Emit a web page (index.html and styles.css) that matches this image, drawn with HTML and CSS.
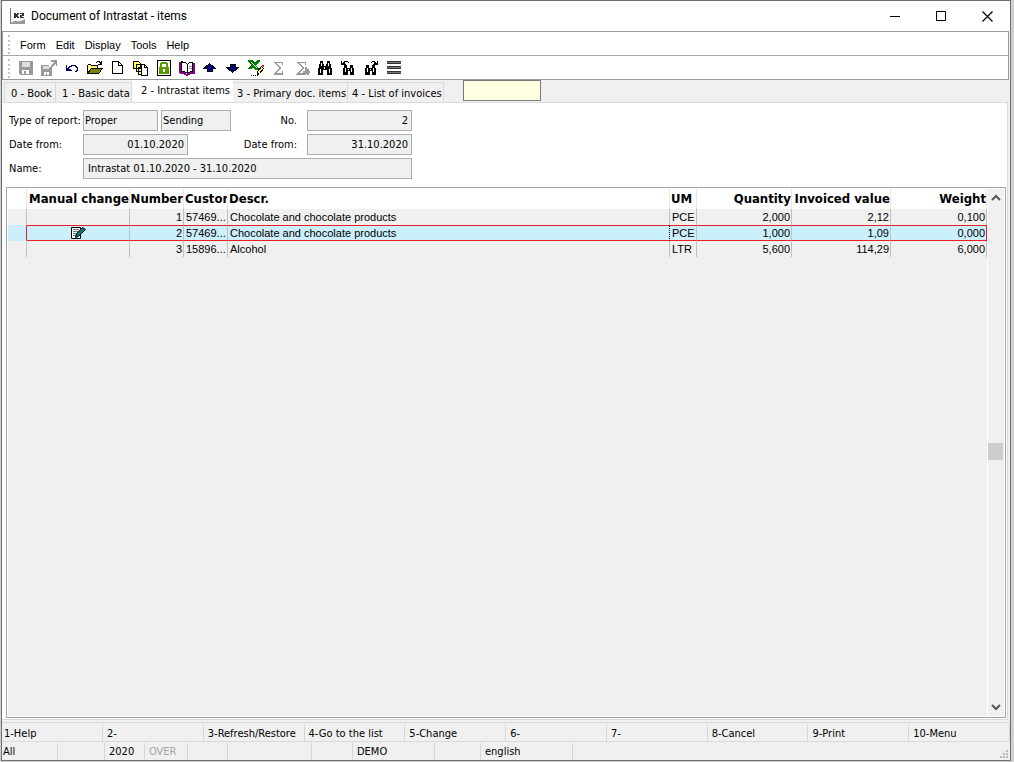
FILE: index.html
```html
<!DOCTYPE html>
<html lang="en">
<head>
<meta charset="utf-8">
<title>Document of Intrastat - items</title>
<link rel="stylesheet" href="styles.css">
</head>
<body>
<div class="window">
  <header class="titlebar">
    <svg class="app-icon" width="16" height="16" viewBox="0 0 16 16"><path d="M0 0h1v16H0z" fill="#777"/><path d="M1 15q3-3 6-2t8-2v5H1z" fill="#999"/><path d="M4 5h2v1h1V5h2v1L7.500 7.500 9 9v1H7V9H6v1H4zM10 5h4v3h-2v1h2v1h-4V7h2V6h-2z" fill="#333"/></svg>
    <h1 class="title">Document of Intrastat - items</h1>
    <div class="caption-buttons">
      <button class="caption" aria-label="Minimize"><svg width="11" height="11" viewBox="0 0 11 11"><path d="M0 5h10v1H0z"/></svg></button>
      <button class="caption" aria-label="Maximize"><svg width="11" height="11" viewBox="0 0 11 11"><path d="M.5.5h9v9h-9z" fill="none" stroke="#000"/></svg></button>
      <button class="caption" aria-label="Close"><svg width="11" height="11" viewBox="0 0 11 11"><path d="M.5.5l10 10M10.500.5l-10 10" fill="none" stroke="#000" stroke-width="1.200"/></svg></button>
    </div>
  </header>

  <div class="bars">
    <nav class="menu">
      <button>Form</button><button>Edit</button><button>Display</button><button>Tools</button><button>Help</button>
    </nav>
    <div class="toolbar">
      <button aria-label="Save"><svg viewBox="0 0 16 16"><path fill="#999" d="M1 1h14v14H2l-1-1z"/><path fill="#ddd" d="M4 2h8v5H4z"/><path fill="#fff" d="M4 10h7v4H8v-3H6v3H4z"/></svg></button>
      <button aria-label="Save and close"><svg viewBox="0 0 16 16"><path fill="#999" d="M0 5h8v2h3v9H0zM10 0h6v6h-1V4h-1v1h-1v1h-1v1h-2V5h1V4h1V3h1V2h-3z"/><path fill="#ddd" d="M2 6h6v3H2z"/><path fill="#fff" d="M3 12h5v3H6v-2H5v2H3z"/></svg></button>
      <button aria-label="Undo"><svg viewBox="0 0 16 16"><path fill="#00007c" d="M2 5h1v3h1V7h1V6h2V5h5v1h1v1h1v4h-1v1h-2v-1h1v-1h1V8h-1V7h-1V6H8v1H6v1H5v1h2v1h1v1H2z"/></svg></button>
      <button aria-label="Open"><svg viewBox="0 0 16 16"><path d="M0 5h1V4h3v1h7v3h5v1h-1v1h-1v2h-1v1h-1v1H0z"/><path fill="#ff7" d="M1 5h3v1h6v2H4v1H3v1H2v1H1z"/><path fill="#808000" d="M4 9h10v1h-1v2h-1v1H2v-1h1v-2h1z"/><path d="M9 2h1V1h3v1h1V1h1v4h-4V4h2V3h-1V2h-2v1H9z"/></svg></button>
      <button aria-label="New"><svg viewBox="0 0 16 16"><path fill="#fff" stroke="#000" d="M2.500 1.500h6l4 4v8h-10zM8.500 1.500v4h4"/></svg></button>
      <button aria-label="Copy"><svg viewBox="0 0 16 16"><path fill="#ff5" stroke="#000" d="M.5 1.500h5l2 2v5h-7zM3.500 4.500h5v7h-5zM5.500 7.500h4v7h-4z"/><path fill="#fff" stroke="#000" d="M8.500 4.500h3l3 3v8h-6zM11.500 4.500v3h3"/></svg></button>
      <button aria-label="Lock"><svg viewBox="0 0 16 16"><path fill="#fff" stroke="#000" d="M1.500.5h13v15h-13z"/><path fill="none" stroke="#5b9a00" stroke-width="2" d="M5 7V4l1-1h4l1 1v3"/><path fill="#5b9a00" d="M3 7h10v7H3z"/><path fill="#fff" d="M7 9h2v3H7z"/></svg></button>
      <button aria-label="Book"><svg viewBox="0 0 16 16"><path fill="#808" d="M0 2h3v10h4v2h2v-2h5V3h2v11h-5v1H9v1H7v-1H5v-1H1v-1H0z"/><path fill="#fff" stroke="#000" d="M8.500 4.500l-2-2h-2l-2-1v10h3l3 2 3-2h2v-9h-3zM8.500 4v9"/><path fill="none" stroke="#999" d="M10 6.500h3M10 8.500h3"/></svg></button>
      <button aria-label="Previous"><svg viewBox="0 0 16 16"><path fill="#00007c" stroke="#000" d="M7.500 3.500L1.500 8.500H5v3h5v-3h3.500z"/></svg></button>
      <button aria-label="Next"><svg viewBox="0 0 16 16"><path fill="#00007c" stroke="#000" d="M7.500 12.500L1.500 7.500H5v-3h5v3h3.500z"/></svg></button>
      <button aria-label="Export to Excel"><svg viewBox="0 0 16 16"><path fill="#008000" d="M0 0h4l3 3 2-3h3v1L8 5l4 5H7L5 7l-2 2H0V8l4-3-4-3z"/><path fill="#fff" d="M3 2h1v1h1v1h1v1h1v1h1v1h1v1H8V7H7V6H6V5H5V4H4V3H3z"/><path fill="#ff5" stroke="#000" d="M13.500 6.500l2 2-4 5-2 1v-3z"/><path fill="#c00" d="M13 5h2l1 1v2z"/><path d="M3 15h1v1H3zM5 15h1v1H5zM7 15h1v1H7zM9 15h1v1H9z"/></svg></button>
      <button aria-label="Sum"><svg viewBox="0 0 16 16"><path fill="#999" d="M3 2h9v3h-1V3H6l4 5-4 5h5v-2h1v4H3v-1l5-6-5-5z"/></svg></button>
      <button aria-label="Sum selected"><svg viewBox="0 0 16 16"><path fill="#999" d="M3 2h9v3h-1V3H5l5 5-4 5h2v2H2v-1l6-6-5-5zM11 7h2v2h2v2h1v2h-1v2h-2v-1h-1v1H8v-2h1v-2h2z"/></svg></button>
      <button aria-label="Find"><svg viewBox="0 0 16 16"><path d="M3 1h3v3h1v2h2V4h1V1h3v3h1v4h1v7h-5v-5H6v5H1V8h1V4h1z"/><path fill="#fff" d="M4 3h1v3H4zM3 9h1v4H3zM7 7h1v2H7zM11 3h1v3h-1zM12 9h1v4h-1z"/></svg></button>
      <button aria-label="Find previous"><svg viewBox="0 0 16 16"><path d="M4 5h3v3h3V5h3v3h1v7h-4v-4H8v4H3V8h1zM1 1h1v2h1V2h1V1h4v1h1v1H8V2H5v2h1v1H1z"/><path fill="#fff" d="M5 8h1v4H5zM8 9h1v1H8zM11 8h1v4h-1z"/></svg></button>
      <button aria-label="Find next"><svg viewBox="0 0 16 16"><path d="M3 5h3v3h3V5h3v3h1v7H9v-4H7v4H2V8h1zM15 1h-1v2h-1V2h-1V1H9v1H8v1h1V2h2v2h-1v1h5z"/><path fill="#fff" d="M4 8h1v4H4zM7 9h1v1H7zM10 8h1v4h-1z"/></svg></button>
      <button aria-label="More"><svg viewBox="0 0 16 16"><path fill="#333" d="M1 1h14v3H1zM1 6h14v3H1zM1 11h14v3H1z"/><path fill="#777" d="M1 2h14v1H1zM1 7h14v1H1zM1 12h14v1H1z"/></svg></button>
    </div>
  </div>

  <div class="tabs" role="tablist">
    <button class="tab t0" role="tab">0 - Book</button><button class="tab t1" role="tab">1 - Basic data</button><button class="tab t2 active" role="tab" aria-selected="true">2 - Intrastat items</button><button class="tab t3" role="tab">3 - Primary doc. items</button><button class="tab t4" role="tab">4 - List of invoices</button>
    <input class="quick" aria-label="Quick search">
  </div>

  <main class="page">
    <form class="fields">
      <div class="row">
        <label class="lead" for="type">Type of report:</label>
        <input class="kind" id="type" value="Proper" readonly>
        <input class="direction" aria-label="Direction" value="Sending" readonly>
        <label class="second" for="number">No.</label>
        <input class="short" id="number" value="2" readonly>
      </div>
      <div class="row">
        <label class="lead" for="from">Date from:</label>
        <input class="short" id="from" value="01.10.2020" readonly>
        <label class="second" for="to">Date from:</label>
        <input class="short" id="to" value="31.10.2020" readonly>
      </div>
      <div class="row">
        <label class="lead" for="name">Name:</label>
        <input class="name" id="name" value="Intrastat 01.10.2020 - 31.10.2020" readonly>
      </div>
    </form>

    <div class="grid">
      <div class="sheet">
        <table>
          <colgroup><col class="c-mark"><col class="c-change"><col class="c-number"><col class="c-custom"><col><col class="c-um"><col class="c-qty"><col class="c-value"><col class="c-weight"></colgroup>
          <thead>
            <tr><th></th><th class="num">Manual change</th><th class="num">Number</th><th>Custor</th><th>Descr.</th><th>UM</th><th class="num">Quantity</th><th class="num">Invoiced value</th><th class="num">Weight</th></tr>
          </thead>
          <tbody>
            <tr><td></td><td></td><td class="num">1</td><td>57469...</td><td>Chocolate and chocolate products</td><td>PCE</td><td class="num">2,000</td><td class="num">2,12</td><td class="num">0,100</td></tr>
            <tr class="selected"><td></td><td class="mark"><svg width="16" height="14" viewBox="0 0 16 14"><path fill="#fff" stroke="#000" d="M1.500 1.500h9v11h-9z"/><path stroke="#777" d="M3 3.500h6M3 5.500h6M3 7.500h4M3 9.500h3"/><path fill="#087a60" stroke="#003" d="M12.500 1.500l3 2-7 7-3 1 1-4z"/></svg></td><td class="num">2</td><td>57469...</td><td class="focus">Chocolate and chocolate products</td><td>PCE</td><td class="num">1,000</td><td class="num">1,09</td><td class="num">0,000</td></tr>
            <tr><td></td><td></td><td class="num">3</td><td>15896...</td><td>Alcohol</td><td>LTR</td><td class="num">5,600</td><td class="num">114,29</td><td class="num">6,000</td></tr>
          </tbody>
        </table>
      </div>
      <div class="scrollbar">
        <button aria-label="Scroll up"><svg width="10" height="8" viewBox="0 0 10 8"><path d="M1 6l4-4 4 4" fill="none" stroke="#555" stroke-width="2"/></svg></button>
        <div class="track"><div class="before"></div><div class="thumb"></div><div class="after"></div></div>
        <button aria-label="Scroll down"><svg width="10" height="8" viewBox="0 0 10 8"><path d="M1 2l4 4 4-4" fill="none" stroke="#555" stroke-width="2"/></svg></button>
      </div>
    </div>
  </main>

  <footer class="footer">
    <div class="keys">
      <button>1-Help</button><button>2-</button><button>3-Refresh/Restore</button><button>4-Go to the list</button><button>5-Change</button><button>6-</button><button>7-</button><button>8-Cancel</button><button>9-Print</button><button>10-Menu</button>
    </div>
    <div class="status">
      <span class="s56">All</span><span class="s47"></span><span class="s40">2020</span><span class="s43 off">OVER</span><span class="s40"></span><span class="s84"></span><span class="s41"></span><span class="s82">DEMO</span><span class="s46"></span><span class="s92">english</span>
      <svg class="grip" width="9" height="9" viewBox="0 0 9 9"><path fill="#bbb" d="M6 0h2v2H6zM3 3h2v2H3zM6 3h2v2H6zM0 6h2v2H0zM3 6h2v2H3zM6 6h2v2H6z"/></svg>
    </div>
  </footer>
</div>
</body>
</html>
```

FILE: styles.css
```css
* { box-sizing: border-box; }
body {
  margin: 0;
  height: 100vh;
  padding: 0 3px 1px 1px;
  background: #d0d0d0;
  color: #000;
  font: 11px/14px "DejaVu Sans Condensed", "DejaVu Sans", sans-serif;
}
button, input { font: inherit; color: inherit; margin: 0; border-radius: 0; }
button { padding: 0; border: 0; background: none; }
svg { display: block; flex: none; }

.window {
  display: flex;
  flex-direction: column;
  height: 100%;
  border: 1px solid #6e6e6e;
  background: #f0f0f0;
}

.titlebar { display: flex; align-items: center; height: 30px; padding-left: 8px; background: #fff; flex: none; }
.title { margin: 0 0 0 5px; font: 12px/16px Roboto, "Liberation Sans", sans-serif; }
.caption-buttons { display: flex; margin-left: auto; }
.caption { display: flex; align-items: center; justify-content: center; width: 46px; height: 28px; }

.bars { flex: none; margin-right: 1px; border: 1px solid #999; background: #fff; }
.menu, .toolbar { position: relative; display: flex; align-items: center; height: 24px; }
.menu { gap: 10px; padding: 2px 0 0 17px; border-bottom: 1px solid #a8a8a8; font-family: "Liberation Sans", sans-serif; }
.toolbar { height: 23px; padding-left: 11px; }
.menu::before, .toolbar::before {
  content: "";
  position: absolute;
  left: 5px;
  top: 3px;
  bottom: 1px;
  border-left: 2px dotted #c4c4c4;
}
.toolbar button { display: flex; justify-content: center; width: 23px; }
.toolbar svg { width: 16px; height: 16px; shape-rendering: crispEdges; }

.tabs { display: flex; align-items: flex-end; flex: none; height: 22px; padding-left: 2px; }
.tab { height: 20px; padding: 2px 0 0 6px; border: 1px solid #dadada; border-width: 1px 1px 0 0; text-align: left; white-space: nowrap; }
.tab:first-child { border-left-width: 1px; }
.tab.active { height: 22px; padding: 0 0 0 9px; border: 0; background: #fff; }
.t0 { width: 52px; }
.t1 { width: 76px; }
.t2 { width: 101px; }
.t3 { width: 115px; padding-left: 4px; }
.t4 { width: 96px; padding-left: 4px; }
.quick { width: 78px; height: 21px; margin: 0 0 1px 19px; border: 1px solid #7a7a7a; background: #ffffe1; }

.page {
  display: flex;
  flex-direction: column;
  flex: 1;
  min-height: 0;
  margin: 0 2px 2px 0;
  padding: 7px 1px 1px 4px;
  border: 1px solid #dadada;
  border-left: 0;
  background: #fff;
}
.fields { display: flex; flex-direction: column; gap: 3px; padding-left: 3px; }
.row { display: flex; align-items: center; width: 403px; }
.row input { height: 21px; padding: 0 3px; border: 1px solid #adadad; background: #f0f0f0; outline: 0; }
.lead { width: 74px; white-space: nowrap; }
.row .kind { width: 75px; padding: 0 1px; }
.row .direction { width: 70px; margin-left: 3px; padding: 0 1px; }
.second { flex: none; margin-left: auto; padding-right: 10px; }
.row .short { width: 105px; text-align: right; }
.row .name { flex: 1; padding-left: 4px; }

.grid { display: flex; flex: 1; min-height: 0; margin-top: 8px; border: 1px solid #a5a5ad; padding: 1px; background: #fff; }
.sheet { flex: 1; min-width: 0; background: #f0f0f0; }
table { width: 100%; table-layout: fixed; border-collapse: separate; border-spacing: 0; font-family: "Liberation Sans", sans-serif; }
th, td { padding: 0 2px; overflow: hidden; white-space: nowrap; text-align: left; border-right: 1px solid #c0c0c0; }
th { height: 20px; padding: 0 1px; background: #fff; border-color: #e8e8e8; font: bold 13px/16px "DejaVu Sans Condensed", "DejaVu Sans", sans-serif; }
td { height: 16px; line-height: 14px; }
.num { text-align: right; }
td.num { padding-right: 1px; }
th.num { padding: 0; }
.c-mark { width: 19px; }
.c-change { width: 103px; }
.c-number { width: 54px; }
.c-custom { width: 44px; }
.c-um { width: 27px; }
.c-qty { width: 95px; }
.c-value { width: 99px; }
.c-weight { width: 96px; }
.selected td { background: #cceffc; border-top: 1px solid #ed1c24; border-bottom: 1px solid #ed1c24; line-height: 14px; }
.selected td:first-child { border-top-color: #cceffc; border-bottom-color: #cceffc; border-right-color: #ed1c24; }
.selected td:last-child { border-right-color: #ed1c24; }
.mark svg { margin: 0 auto; }
.selected .focus { border-right: 1px dotted #000; }

.scrollbar { display: flex; flex-direction: column; width: 17px; border-left: 1px solid #fff; background: #f0f0f0; }
.scrollbar button { display: flex; align-items: center; justify-content: center; height: 18px; }
.track { display: flex; flex-direction: column; flex: 1; }
.before { flex: 239; }
.thumb { height: 17px; margin-right: 1px; background: #cdcdcd; }
.after { flex: 241; }

.footer { flex: none; border-top: 1px solid #dadada; }
.keys { display: flex; height: 19px; padding-top: 1px; border-bottom: 1px solid #dadada; }
.keys button { flex: 1; min-width: 0; padding: 2px 0 0 4px; text-align: left; white-space: nowrap; border-right: 1px solid #d7d7d7; }
.keys button:first-child { flex: none; width: 101px; padding-left: 2px; }
.status { display: flex; height: 18px; padding-top: 1px; }
.status span { padding: 2px 0 0 4px; border-right: 1px solid #d7d7d7; }
.status span:first-child { padding-left: 1px; }
.s40 { width: 40px; }
.s41 { width: 41px; }
.s43 { width: 43px; }
.s46 { width: 46px; }
.s47 { width: 47px; }
.s56 { width: 56px; }
.s82 { width: 82px; }
.s84 { width: 84px; }
.s92 { width: 92px; }
.status .off { color: #a5a5a5; }
.grip { margin: auto 1px 1px auto; }
```
